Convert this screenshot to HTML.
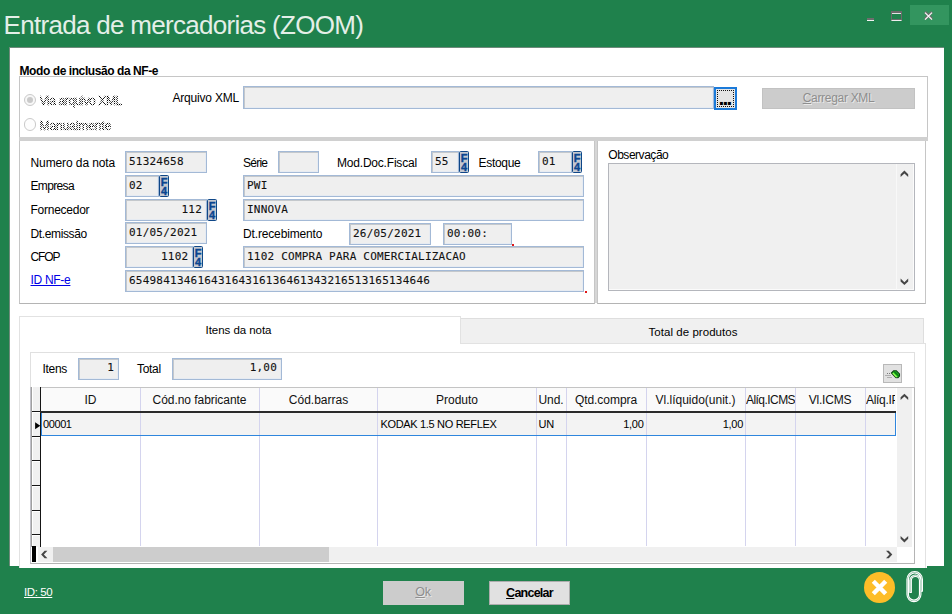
<!DOCTYPE html>
<html lang="pt-BR">
<head>
<meta charset="utf-8">
<title>Entrada de mercadorias (ZOOM)</title>
<style>
*{box-sizing:border-box;margin:0;padding:0}
html,body{width:952px;height:614px;overflow:hidden}
body{background:#1f814c;font-family:"Liberation Sans",sans-serif;font-size:12px;color:#000;position:relative}
.abs{position:absolute;left:0;top:0;width:952px;height:614px}
.abs>div,.abs>svg{position:absolute}
.title{left:3.5px;top:8.5px;font-size:26px;line-height:32px;color:#e4efe8;white-space:nowrap}
.lbl{font-size:12px;line-height:14px;white-space:nowrap;color:#000}
.dis{color:#000;-webkit-text-stroke:0.35px #000;-webkit-mask-image:repeating-conic-gradient(#000 0 25%,transparent 0 50%);-webkit-mask-size:2px 2px;mask-image:repeating-conic-gradient(#000 0 25%,transparent 0 50%);mask-size:2px 2px}
.in{background:#efefef;border:1px solid #a3b9d6;box-shadow:inset 1px 1px 0 #c4c8cc,inset -1px -1px 0 #e6ebf2;font-family:"DejaVu Sans Mono","Liberation Mono",monospace;font-size:11px;line-height:14px;padding:3px 0 0 3px;-webkit-text-stroke:0.1px #111;white-space:nowrap;overflow:hidden;color:#111}
.in.r{text-align:right;padding-right:4px}
.f4{width:10px;height:22px;background:#c3c8d0;border:1px solid #0f4788;border-radius:1.5px;overflow:hidden}
.f4 b{display:block;font-size:11px;line-height:9px;height:9px;text-align:center;color:#0b4590;font-family:"Liberation Sans",sans-serif;margin-left:-1px;width:10px;-webkit-text-stroke:0.4px #0b4590}
.f4 b:first-child{margin-top:2px}
.btn{font-size:13px;line-height:15px;text-align:center;white-space:nowrap}
.hd{top:388px;height:23px;line-height:24px;text-align:center;font-size:12px;white-space:nowrap;overflow:hidden;color:#111}
.vl{top:388px;width:1px;height:158px;background:#d4d4ee}
.cell{font-size:11px;line-height:14px;white-space:nowrap;color:#000;top:417px}
</style>
</head>
<body>
<div class="abs">
<div class="title" style="letter-spacing:-0.7px">Entrada de mercadorias (ZOOM)</div>
<div style="left:910px;top:5px;width:39px;height:20px;background:#33955f"></div>
<div style="left:867px;top:18px;width:7px;height:3px;background:#6d6d6d;border-bottom:1px solid #f2f2f2"></div>
<div style="left:891px;top:11px;width:11px;height:10px;border:1px solid #6a6a6a;border-top:2px solid #6a6a6a;border-bottom:1px solid #eeeeee;box-shadow:inset 0 -1px 0 #6a6a6a,inset 0 1px 0 #dfe6e2"></div>
<svg style="left:923px;top:10px" width="11" height="11" viewBox="0 0 11 11"><path d="M2 2L9 9M9 2L2 9" stroke="#6c6f6d" stroke-width="2.7" fill="none"/><path d="M2 2.6L9 9.6M9 2.6L2 9.6" stroke="#f8f8f8" stroke-width="1.25" fill="none"/></svg>
<div style="left:9px;top:47px;width:935px;height:519px;background:#6f8a7b"></div>
<div style="left:10px;top:48px;width:933.5px;height:517.7px;background:#fff"></div>
<div style="left:19px;top:560px;width:908px;height:8px;background:#fff"></div>
<div class="lbl" style="left:19.5px;top:63.5px;letter-spacing:-0.42px;font-weight:bold">Modo de inclusão da NF-e</div>
<div style="left:19px;top:76px;width:909px;height:62px;border:1px solid #c6c6c6;border-bottom:none"></div>
<div style="left:19px;top:137px;width:909px;height:4px;background:#d0d0d0"></div>
<div style="left:23.6px;top:93.6px;width:12.6px;height:12.6px;border:1px solid #cacaca;border-radius:50%;background:#f7f7f7"></div>
<div style="left:26.9px;top:96.9px;width:6px;height:6px;border-radius:50%;background:#c9c9c9"></div>
<div style="left:23.6px;top:118.2px;width:12.6px;height:12.6px;border:1px solid #cacaca;border-radius:50%;background:#fdfdfd"></div>
<div class="lbl dis" style="left:39.5px;top:94px;letter-spacing:-0.36px;">Via arquivo XML</div>
<div class="lbl dis" style="left:39.5px;top:118.6px;letter-spacing:-0.1px;">Manualmente</div>
<div class="lbl" style="left:172.5px;top:91px;letter-spacing:-0.2px;">Arquivo XML</div>
<div class="in" style="left:243px;top:86px;width:471px;height:23px;letter-spacing:0.22px;"></div>
<div style="left:714px;top:87px;width:23px;height:23px;border:2px solid #1b7ad9;background:#e5e5e5"></div>
<div style="left:717px;top:90px;width:17px;height:17px;border:1px dotted #111"></div>
<div class="lbl" style="left:718.6px;top:88px;letter-spacing:-1.85px;font-weight:bold;font-size:21px;line-height:20px">...</div>
<div class="btn" style="left:762.4px;top:87.5px;width:152.3px;height:21.2px;background:#cccccc;box-shadow:inset 0 0 0 1px #c2c2c2;color:#8e8e8e;padding-top:3px;font-size:12px;text-shadow:1px 1px 0 #e9e9e9;letter-spacing:-0.3px"><u>C</u>arregar XML</div>
<div style="left:19px;top:141px;width:576px;height:163px;border:1px solid #c6c6c6;border-top:none;border-bottom-color:#b4b4b4"></div>
<div style="left:597px;top:141px;width:329px;height:163px;border:1px solid #c6c6c6;border-top:none;border-bottom-color:#b4b4b4"></div>
<div style="left:595px;top:141px;width:2px;height:162px;background:#d6d6d6"></div>
<div class="lbl" style="left:30.5px;top:156px;letter-spacing:-0.1px;">Numero da nota</div>
<div class="lbl" style="left:30.5px;top:179px;letter-spacing:-0.65px;">Empresa</div>
<div class="lbl" style="left:30.5px;top:203px;letter-spacing:-0.25px;">Fornecedor</div>
<div class="lbl" style="left:30.5px;top:227px;letter-spacing:-0.37px;">Dt.emissão</div>
<div class="lbl" style="left:30.5px;top:250px;letter-spacing:-1.1px;">CFOP</div>
<div class="lbl" style="left:30.5px;top:273px;letter-spacing:-0.3px;color:#0000e6;text-decoration:underline">ID NF-e</div>
<div class="in" style="left:125px;top:151px;width:82px;height:22px;letter-spacing:0.22px;">51324658</div>
<div class="lbl" style="left:243px;top:156px;letter-spacing:-0.75px;">Série</div>
<div class="in" style="left:278px;top:151px;width:41px;height:22px;letter-spacing:0.22px;"></div>
<div class="lbl" style="left:337px;top:156px;letter-spacing:-0.2px;">Mod.Doc.Fiscal</div>
<div class="in" style="left:431px;top:151px;width:28px;height:22px;letter-spacing:0.22px;">55</div>
<div class="f4" style="left:459px;top:151px"><b>F</b><b>4</b></div>
<div class="lbl" style="left:478.5px;top:156px;letter-spacing:-0.3px;">Estoque</div>
<div class="in" style="left:538px;top:151px;width:34px;height:22px;letter-spacing:0.22px;">01</div>
<div class="f4" style="left:572px;top:151px"><b>F</b><b>4</b></div>
<div class="in" style="left:125px;top:175px;width:34px;height:22px;letter-spacing:0.22px;">02</div>
<div class="f4" style="left:159px;top:175px"><b>F</b><b>4</b></div>
<div class="in" style="left:243px;top:175px;width:341px;height:22px;letter-spacing:0.22px;">PWI</div>
<div class="in r" style="left:125px;top:199px;width:82px;height:22px;letter-spacing:0.22px;">112</div>
<div class="f4" style="left:207px;top:199px"><b>F</b><b>4</b></div>
<div class="in" style="left:243px;top:199px;width:341px;height:22px;letter-spacing:0.22px;">INNOVA</div>
<div class="in" style="left:125px;top:222px;width:82px;height:22px;letter-spacing:0.22px;">01/05/2021</div>
<div class="lbl" style="left:243px;top:227px;letter-spacing:-0.15px;">Dt.recebimento</div>
<div class="in" style="left:349px;top:223px;width:82px;height:22px;letter-spacing:0.22px;">26/05/2021</div>
<div class="in" style="left:443px;top:223px;width:69px;height:22px;letter-spacing:0.22px;">00:00:</div>
<div style="left:512px;top:244px;width:2px;height:2px;background:#e01818"></div>
<div class="in r" style="left:125px;top:246px;width:68px;height:22px;letter-spacing:0.22px;padding-right:3.6px;">1102</div>
<div class="f4" style="left:193px;top:246px"><b>F</b><b>4</b></div>
<div class="in" style="left:243px;top:246px;width:341px;height:22px;letter-spacing:0.22px;">1102 COMPRA PARA COMERCIALIZACAO</div>
<div class="in" style="left:125px;top:270px;width:459px;height:22px;letter-spacing:0.22px;">65498413461643164316136461343216513165134646</div>
<div style="left:585px;top:291px;width:2px;height:2px;background:#e01818"></div>
<div class="lbl" style="left:608.3px;top:148px;letter-spacing:-0.47px;">Observação</div>
<div style="left:608px;top:163px;width:307px;height:128px;background:#f0f0f0;border:1px solid #b4b6bc;box-shadow:inset -1px -1px 0 #fbfbfb"></div>
<div style="left:896px;top:164px;width:1px;height:126px;background:#f8f8f8"></div>
<div style="left:460px;top:318px;width:464px;height:26px;background:#f0f0f0;border:1px solid #dedede"></div>
<div style="left:19px;top:343px;width:907px;height:225px;border:1px solid #e2e2e2;border-bottom:none"></div>
<div style="left:19px;top:316px;width:442px;height:28px;background:#fff;border:1px solid #e2e2e2;border-bottom:none"></div>
<div class="lbl" style="left:18px;top:323px;letter-spacing:-0.05px;width:441px;text-align:center;font-size:11.5px">Itens da nota</div>
<div class="lbl" style="left:461px;top:325px;letter-spacing:0.05px;width:464px;text-align:center;font-size:11.5px">Total de produtos</div>
<div style="left:30px;top:352px;width:885px;height:212px;border:1px solid #e0e0e0"></div>
<div class="lbl" style="left:42.5px;top:362px;letter-spacing:-0.3px;">Itens</div>
<div class="in r" style="left:78px;top:358px;width:41px;height:22px;letter-spacing:0.22px;padding-top:2px;">1</div>
<div class="lbl" style="left:137px;top:362px;letter-spacing:-0.3px;">Total</div>
<div class="in r" style="left:172px;top:358px;width:110px;height:22px;letter-spacing:0.22px;padding-top:2px;">1,00</div>
<div style="left:883px;top:364px;width:19px;height:19px;background:#e1e1e1;border:1px solid #b8b8b8"></div>
<svg style="left:884px;top:365px" width="17" height="17" viewBox="0 0 17 17"><path d="M3 8.5h3.5M1.5 10.5h5M3.5 12.5h4.5" stroke="#7a7a7a" stroke-width="1" stroke-dasharray="1 1" fill="none"/><path d="M7.3 7.6L9.6 5.2H12.6L16 8.6V11.2L14.2 13.4H11.8Z" fill="#fff"/><path d="M7.5 8L9.6 5.8H12.4L15.5 8.9V11L14 12.8H12Z" fill="#25cf25" stroke="#0b3d10" stroke-width="1.1"/><path d="M10.2 6.4L15 11.2" stroke="#0c7a12" stroke-width="1.6"/><path d="M8.8 8.2L12.6 12" stroke="#a6ff5a" stroke-width="1.2"/></svg>
<div style="left:30px;top:387px;width:885px;height:177px;background:#fff;border-left:1px solid #c0c0c8;border-top:1px solid #c4c4c4;border-right:1px solid #b4b4b4;border-bottom:1px solid #b4b4b4"></div>
<div style="left:31px;top:387px;width:865px;height:24px;background:#fafafa;border-top:1px solid #c4c4c4"></div>
<div style="left:41px;top:413px;width:855px;height:22px;background:#f3f3f3"></div>
<div class="hd" style="left:41px;width:99px;letter-spacing:0px">ID</div>
<div class="hd" style="left:140px;width:119px;letter-spacing:-0.05px">Cód.no fabricante</div>
<div class="hd" style="left:259px;width:119px;letter-spacing:0px">Cód.barras</div>
<div class="hd" style="left:378px;width:158px;letter-spacing:0px">Produto</div>
<div class="hd" style="left:536px;width:30px;letter-spacing:-0.1px">Und.</div>
<div class="hd" style="left:566px;width:80px;letter-spacing:-0.05px">Qtd.compra</div>
<div class="hd" style="left:646px;width:99px;letter-spacing:0px">Vl.líquido(unit.)</div>
<div class="hd" style="left:745px;width:50px;text-align:left;padding-left:1px;letter-spacing:-0.55px">Alíq.ICMS</div>
<div class="hd" style="left:795px;width:70px;letter-spacing:-0.2px">Vl.ICMS</div>
<div class="hd" style="left:865px;width:30px;text-align:left;padding-left:1px;letter-spacing:-0.3px">Alíq.IPI</div>
<div class="vl" style="left:140px"></div>
<div class="vl" style="left:259px"></div>
<div class="vl" style="left:377px"></div>
<div class="vl" style="left:536px"></div>
<div class="vl" style="left:566px"></div>
<div class="vl" style="left:646px"></div>
<div class="vl" style="left:745px"></div>
<div class="vl" style="left:795px"></div>
<div class="vl" style="left:865px"></div>
<div style="left:31px;top:387px;width:10px;height:160px;background:#f0f0f0;border-left:1px solid #a0a0a0;box-shadow:inset 1px 0 0 #fff"></div>
<div style="left:40.1px;top:387px;width:1.3px;height:159.5px;background:#151515"></div>
<div style="left:32px;top:411px;width:8px;height:1px;background:#141414"></div>
<div style="left:32px;top:412px;width:8px;height:1px;background:#fff"></div>
<div style="left:32px;top:436px;width:8px;height:1px;background:#141414"></div>
<div style="left:32px;top:437px;width:8px;height:1px;background:#fff"></div>
<div style="left:32px;top:460px;width:8px;height:1px;background:#141414"></div>
<div style="left:32px;top:461px;width:8px;height:1px;background:#fff"></div>
<div style="left:32px;top:485px;width:8px;height:1px;background:#141414"></div>
<div style="left:32px;top:486px;width:8px;height:1px;background:#fff"></div>
<div style="left:32px;top:510px;width:8px;height:1px;background:#141414"></div>
<div style="left:32px;top:511px;width:8px;height:1px;background:#fff"></div>
<div style="left:32px;top:534px;width:8px;height:1px;background:#141414"></div>
<div style="left:32px;top:535px;width:8px;height:1px;background:#fff"></div>
<div style="left:40px;top:411px;width:856px;height:2px;background:#2a2a2a"></div>
<div style="left:41px;top:435px;width:855px;height:1px;background:#2f86dd"></div>
<div style="left:895px;top:413px;width:1px;height:23px;background:#2f86dd"></div>
<div style="left:41px;top:413px;width:1px;height:23px;background:#2f86dd"></div>
<svg style="left:35px;top:422px" width="6" height="8" viewBox="0 0 6 8"><path d="M0.1 0.3L5.3 3.8L0.1 7.3Z" fill="#000"/></svg>
<div class="cell" style="left:43px;letter-spacing:-0.4px">00001</div>
<div class="cell" style="left:380.5px;letter-spacing:-0.33px">KODAK 1.5 NO REFLEX</div>
<div class="cell" style="left:538.5px;letter-spacing:-0.1px">UN</div>
<div class="cell" style="left:566px;width:77.5px;text-align:right;letter-spacing:-0.3px">1,00</div>
<div class="cell" style="left:646px;width:97px;text-align:right;letter-spacing:-0.3px">1,00</div>
<div style="left:897px;top:388px;width:15.4px;height:158.6px;background:#f0f0f0"></div>
<div style="left:38px;top:546.5px;width:859px;height:15.6px;background:#f0f0f0"></div>
<div style="left:32.2px;top:546.3px;width:4.2px;height:15.6px;background:#000"></div>
<div style="left:53px;top:547px;width:276px;height:15px;background:#cdcdcd"></div>
<svg style="left:899px;top:169px" width="12" height="12" viewBox="899 169 12 12"><polygon points="900.60,174.20 904.40,170.50 908.20,174.20 908.20,177.10 904.40,173.40 900.60,177.10" fill="#464646"/></svg>
<svg style="left:899px;top:277px" width="12" height="12" viewBox="899 277 12 12"><polygon points="900.60,278.60 904.40,282.24 908.20,278.60 908.20,281.46 904.40,285.10 900.60,281.46" fill="#464646"/></svg>
<svg style="left:899px;top:392px" width="12" height="12" viewBox="899 392 12 12"><polygon points="900.60,397.23 904.40,393.70 908.20,397.23 908.20,400.00 904.40,396.47 900.60,400.00" fill="#464646"/></svg>
<svg style="left:899px;top:534px" width="12" height="12" viewBox="899 534 12 12"><polygon points="900.60,535.90 904.40,539.54 908.20,535.90 908.20,538.76 904.40,542.40 900.60,538.76" fill="#464646"/></svg>
<svg style="left:40px;top:549px" width="12" height="12" viewBox="40 549 12 12"><polygon points="44.63,550.80 41.10,554.50 44.63,558.20 47.40,558.20 43.87,554.50 47.40,550.80" fill="#464646"/></svg>
<svg style="left:885px;top:549px" width="12" height="12" viewBox="885 549 12 12"><polygon points="886.00,550.80 889.53,554.50 886.00,558.20 888.77,558.20 892.30,554.50 888.77,550.80" fill="#464646"/></svg>
<div class="lbl" style="left:24px;top:585px;letter-spacing:-0.4px;color:#fff;text-decoration:underline;font-size:11.5px">ID: 50</div>
<div class="btn" style="left:383px;top:581px;width:81px;height:24px;background:#cccccc;color:#8e8e8e;padding-top:4px;font-size:12.5px;letter-spacing:-0.3px;padding-right:1px;text-shadow:1px 1px 0 #e9e9e9"><u>O</u>k</div>
<div class="btn" style="left:489px;top:581px;width:81px;height:24px;background:#e1e1e1;border:1px solid #adadad;color:#000;font-weight:bold;padding-top:4px;font-size:12.5px;letter-spacing:-0.75px"><u>C</u>ancelar</div>
<div style="left:864px;top:572px;width:31px;height:31px;border-radius:50%;background:#fdbd28"></div>
<svg style="left:869px;top:577px" width="21" height="21" viewBox="0 0 21 21"><path d="M4.3 4.3L16.7 16.7M16.7 4.3L4.3 16.7" stroke="#fff" stroke-width="4.4" fill="none"/></svg>
<svg style="left:904px;top:569px" width="22" height="36" viewBox="904 569 22 36" fill="none"><path d="M910.6 592.5V580.5A4.8 4.8 0 0 1 920.2 580.5V594.6A6.2 6.2 0 0 1 907.7 594.6V579.3A7 7 0 0 1 921.7 579.3V591.2" stroke="#fff" stroke-opacity="0.28" stroke-width="1.6"/><path d="M909.85 592.5V580.5A5.55 5.55 0 0 1 920.95 580.5V594.6A6.95 6.95 0 0 1 906.95 594.6V579.3A7.75 7.75 0 0 1 922.45 579.3V591.2M911.35 592.5V580.5A4.05 4.05 0 0 1 919.45 580.5V594.6A5.45 5.45 0 0 1 908.45 594.6V579.3A6.25 6.25 0 0 1 920.95 579.3V591.2M909.4 592.5H911.8M920.5 591.2H922.9" stroke="#fff" stroke-width="1.1"/></svg>
</div>
</body>
</html>
